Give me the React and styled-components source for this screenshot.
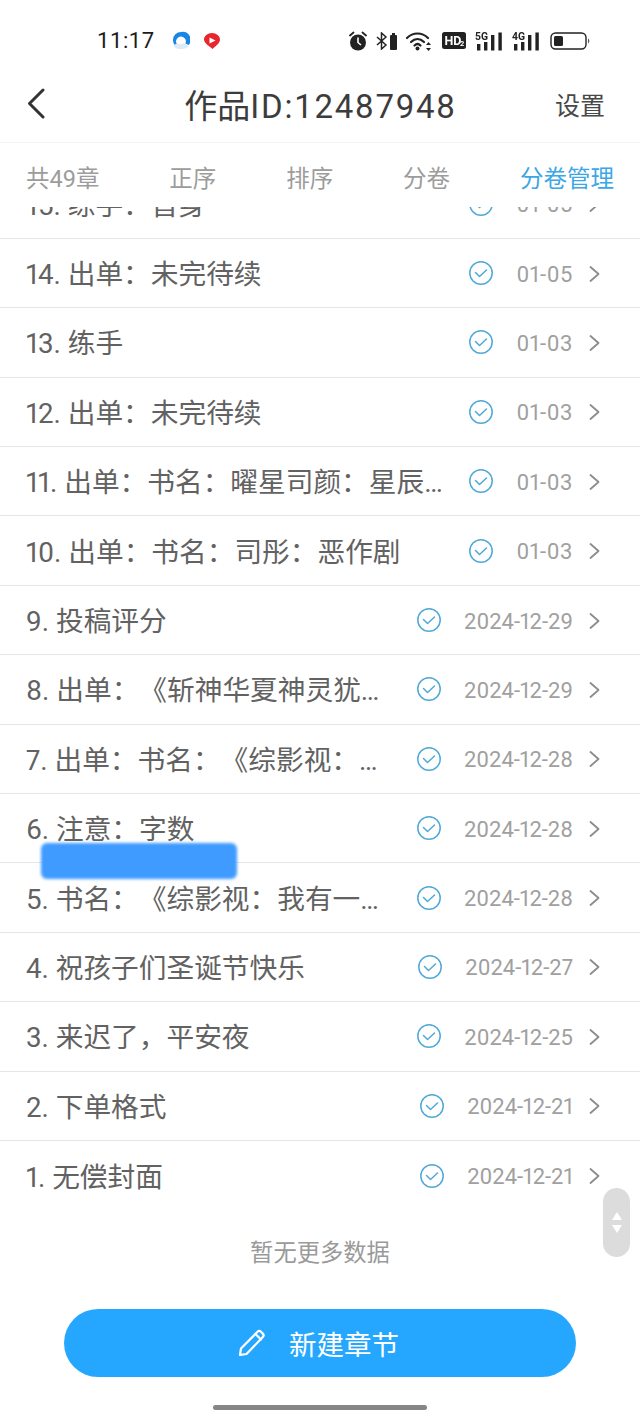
import React from "react";
import styled, { createGlobalStyle } from "styled-components";

const Global = createGlobalStyle`
  html, body { margin: 0; padding: 0; background: #fff; }
  * { box-sizing: border-box; }
`;

const FONT = `Roboto, "Noto Sans CJK SC", sans-serif`;

const Page = styled.div`
  position: relative;
  width: 640px;
  height: 1423px;
  overflow: hidden;
  background: #fff;
  font-family: ${FONT};
  text-spacing-trim: space-all;
  display: flex;
  flex-direction: column;
`;

const StatusBar = styled.div`
  height: 70px;
  flex: none;
  padding: 11px 50px 0 97px;
  display: flex;
  align-items: center;
`;
const Time = styled.span`
  font-size: 22px;
  letter-spacing: 0.6px;
  color: #1c1c1c;
  width: 75px;
`;
const AppIcons = styled.div`
  display: flex;
  gap: 13px;
  align-items: center;
  filter: blur(0.5px);
`;
const StatusIcons = styled.div`
  margin-left: auto;
  display: flex;
  align-items: center;
  gap: 9px;
  filter: blur(0.3px);
`;

const Header = styled.header`
  height: 73px;
  flex: none;
  display: flex;
  align-items: center;
  justify-content: space-between;
  padding: 0 35px 0 26px;
  border-bottom: 1px solid #f4f4f4;
`;
const BackButton = styled.span`
  display: flex;
  width: 22px;
  margin-top: -6px;
`;
const Title = styled.h1`
  margin: 0 0 0 38px;
  font-size: 33px;
  font-weight: 400;
  line-height: 1;
  color: #3c3c3c;
`;
const TitleId = styled.span`
  letter-spacing: 1.75px;
`;
const Settings = styled.span`
  font-size: 25px;
  color: #484848;
  margin-top: -4px;
`;

const Tabs = styled.nav`
  height: 64px;
  flex: none;
  display: flex;
  align-items: center;
  justify-content: space-between;
  padding: 10px 26px 7px;
`;
const Tab = styled.span`
  font-size: 23.5px;
  color: ${(p) => (p.$active ? "#3ba7e6" : "#9c9c9c")};
`;

const List = styled.div`
  height: 1003px;
  flex: none;
  overflow: hidden;
`;
const ListInner = styled.div`
  margin-top: -37.5px;
`;
const Row = styled.div`
  height: 69.4px;
  display: flex;
  align-items: center;
  padding: 0 40px 0 26px;
  border-bottom: ${(p) => (p.$last ? "none" : "1.5px solid #e6e6e6")};
`;
const RowTitle = styled.span`
  flex: 1;
  min-width: 0;
  white-space: nowrap;
  overflow: hidden;
  text-overflow: ellipsis;
  font-size: 27.7px;
  font-variant-numeric: proportional-nums;
  color: #626262;
  margin: 0 16px 2px 0;
`;
const Check = styled.svg`
  width: 26px;
  height: 26px;
  flex: none;
  margin-right: 22px;
`;
const RowDate = styled.span`
  font-size: 22px;
  font-variant-numeric: proportional-nums;
  letter-spacing: ${(p) => (p.$short ? "0.6px" : "0")};
  color: #a0a0a0;
  flex: none;
  margin-top: 2px;
`;
const Chevron = styled.svg`
  width: 11px;
  height: 18px;
  flex: none;
  margin-left: 16px;
  margin-top: 1px;
`;

const NoMore = styled.div`
  margin-top: 28px;
  text-align: center;
  font-size: 23.3px;
  line-height: 30px;
  color: #9a9a9a;
`;

const CreateButton = styled.button`
  margin: 41px auto 0;
  width: 512px;
  height: 68px;
  flex: none;
  border: none;
  border-radius: 34px;
  background: #26a7ff;
  color: #fff;
  font-family: ${FONT};
  font-size: 27.5px;
  display: flex;
  align-items: center;
  justify-content: center;
  gap: 23px;
  padding: 0 3px 0 0;
`;

const HomeBar = styled.div`
  margin: 28px auto 0;
  width: 214px;
  height: 5px;
  border-radius: 3px;
  background: #868686;
  flex: none;
`;

const Redaction = styled.div`
  position: absolute;
  left: 41px;
  top: 843px;
  width: 196px;
  height: 36px;
  border-radius: 6px;
  background: #3f9bff;
  filter: blur(1.8px);
`;

const ScrollHandle = styled.div`
  position: absolute;
  left: 603px;
  top: 1188px;
  width: 27px;
  height: 69px;
  border-radius: 14px;
  background: #dcdcdc;
  display: flex;
  flex-direction: column;
  align-items: center;
  justify-content: center;
  gap: 5px;
`;

const rows = [
  ["15. 练手：晋身", "01-05"],
  ["14. 出单：未完待续", "01-05"],
  ["13. 练手", "01-03"],
  ["12. 出单：未完待续", "01-03"],
  ["11. 出单：书名：曜星司颜：星辰大海的征途", "01-03"],
  ["10. 出单：书名：司彤：恶作剧", "01-03"],
  ["9. 投稿评分", "2024-12-29"],
  ["8. 出单：《斩神华夏神灵犹在人间》", "2024-12-29"],
  ["7. 出单：书名：《综影视：我有一个系统》", "2024-12-28"],
  ["6. 注意：字数", "2024-12-28"],
  ["5. 书名：《综影视：我有一个系统》", "2024-12-28"],
  ["4. 祝孩子们圣诞节快乐", "2024-12-27"],
  ["3. 来迟了，平安夜", "2024-12-25"],
  ["2. 下单格式", "2024-12-21"],
  ["1. 无偿封面", "2024-12-21"],
];

const CheckIcon = () => (
  <Check viewBox="0 0 26 26" fill="none" stroke="#4fa9d8" strokeWidth="1.5" strokeLinecap="round" strokeLinejoin="round">
    <circle cx="13" cy="13" r="11.2" />
    <path d="M7.5 12.5l4 4 7-6.5" />
  </Check>
);

const ChevronIcon = () => (
  <Chevron viewBox="0 0 11 18" fill="none" stroke="#8c8c8c" strokeWidth="1.8" strokeLinecap="round" strokeLinejoin="round">
    <path d="M1.5 2l8 7-8 7" />
  </Chevron>
);

const Signal = ({ label }) => (
  <svg width="28" height="20" viewBox="0 0 28 20">
    <text x="0" y="9" fontFamily="Roboto, sans-serif" fontSize="11.5" fontWeight="700" fill="#222" textLength="13" lengthAdjust="spacingAndGlyphs">{label}</text>
    <rect x="2" y="13" width="3.4" height="6.5" fill="#222" />
    <rect x="9" y="11" width="3.4" height="8.5" fill="#222" />
    <rect x="16" y="4" width="3.4" height="15.5" fill="#222" />
    <rect x="23.4" y="1.5" width="3.4" height="18" fill="#222" />
  </svg>
);

export default function App() {
  return (
    <Page>
      <Global />
      <StatusBar>
        <Time>11:17</Time>
        <AppIcons>
          <svg width="18" height="20" viewBox="0 0 18 20">
            <path d="M9 1a8 8 0 0 0-8 8c0 2 .7 3.700 1.800 5h3a4.800 4.800 0 1 1 7.500-1.500l3.500 1.500A8 8 0 0 0 9 1z" fill="#1a86e4" />
            <path d="M2 15c2-4 5-1 7-2 2-1 5-1 7 2 0 2-3 3-7 3s-7-1-7-3z" fill="#dcebf6" />
          </svg>
          <svg width="18" height="18" viewBox="0 0 18 18">
            <path d="M9 1c4.500 0 8 3 8 6.500S13 14 9.500 17C6 14 1 11 1 7.500S4.500 1 9 1z" fill="#e8262f" />
            <path d="M6.500 5.500l6 3-6 3z" fill="#fff" />
          </svg>
        </AppIcons>
        <StatusIcons>
          <svg width="18" height="20" viewBox="0 0 18 20">
            <circle cx="9" cy="11.500" r="8" fill="#222" />
            <path d="M1 4.500L4.500 1.500M17 4.500L13.500 1.500" stroke="#222" strokeWidth="1.800" strokeLinecap="round" />
            <path d="M9 6.500v5l3 2.500" stroke="#fff" strokeWidth="1.600" fill="none" />
          </svg>
          <svg width="21" height="18" viewBox="0 0 21 18">
            <path d="M1 5l9 8-4.500 4V1L10 5l-9 8" fill="none" stroke="#222" strokeWidth="1.500" />
            <rect x="14" y="3" width="7" height="15" rx="1" fill="#222" />
            <rect x="16" y="1" width="3" height="2" fill="#222" />
          </svg>
          <svg width="27" height="20" viewBox="0 0 27 20">
            <g fill="none" stroke="#222" strokeWidth="2.200" strokeLinecap="round">
              <path d="M1 7c6-6 15-6 21 0" />
              <path d="M5 11c4-4 9-4 13 0" />
              <path d="M8.500 14.500c2-2 4-2 6 0" />
            </g>
            <circle cx="11.500" cy="17.500" r="2" fill="#222" />
            <path d="M22.500 11l2.500 3h-5zM22.500 20l2.500-3h-5z" fill="#222" />
          </svg>
          <svg width="24" height="17" viewBox="0 0 24 17">
            <rect width="24" height="17" rx="2.500" fill="#222" />
            <text x="2.500" y="13" fontFamily="Roboto, sans-serif" fontSize="12.500" fontWeight="700" fill="#fff">HD</text>
            <text x="18" y="14" fontFamily="Roboto, sans-serif" fontSize="7.500" fontWeight="700" fill="#fff">2</text>
          </svg>
          <Signal label="5G" />
          <Signal label="4G" />
          <svg width="40" height="18" viewBox="0 0 40 18" style={{ marginLeft: "1px" }}>
            <rect x="1" y="1" width="35" height="16" rx="4.500" fill="none" stroke="#222" strokeWidth="1.400" />
            <rect x="4" y="4" width="9" height="10" rx="1.500" fill="#222" />
            <path d="M38 6.500a3 3 0 0 1 0 5z" fill="#555" />
          </svg>
        </StatusIcons>
      </StatusBar>

      <Header>
        <BackButton>
          <svg width="20" height="32" viewBox="0 0 20 32" fill="none" stroke="#333" strokeWidth="3" strokeLinecap="round" strokeLinejoin="round">
            <path d="M17 3L3.500 16.500 17 30" />
          </svg>
        </BackButton>
        <Title>作品<TitleId>ID:12487948</TitleId></Title>
        <Settings>设置</Settings>
      </Header>

      <Tabs>
        <Tab>共49章</Tab>
        <Tab>正序</Tab>
        <Tab>排序</Tab>
        <Tab>分卷</Tab>
        <Tab $active>分卷管理</Tab>
      </Tabs>

      <List>
        <ListInner>
          {rows.map(([title, date], i) => (
            <Row key={title} $last={i === rows.length - 1}>
              <RowTitle>{title}</RowTitle>
              <CheckIcon />
              <RowDate $short={date.length < 6}>{date}</RowDate>
              <ChevronIcon />
            </Row>
          ))}
        </ListInner>
      </List>

      <NoMore>暂无更多数据</NoMore>

      <CreateButton>
        <svg width="28" height="28" viewBox="0 0 28 28" fill="none" stroke="#fff" strokeWidth="2.200" strokeLinejoin="round" strokeLinecap="round">
          <path d="M2 26l1-6.500L19.500 2.800a2.500 2.500 0 0 1 3.500 0l1.800 1.800a2.500 2.500 0 0 1 0 3.500L8.500 25z" />
          <path d="M17.500 5l5.500 5.500" />
        </svg>
        新建章节
      </CreateButton>

      <HomeBar />

      <Redaction />
      <ScrollHandle>
        <svg width="10" height="8" viewBox="0 0 10 8"><path d="M5 0l5 8H0z" fill="#fff" /></svg>
        <svg width="10" height="8" viewBox="0 0 10 8"><path d="M5 8l5-8H0z" fill="#fff" /></svg>
      </ScrollHandle>
    </Page>
  );
}
